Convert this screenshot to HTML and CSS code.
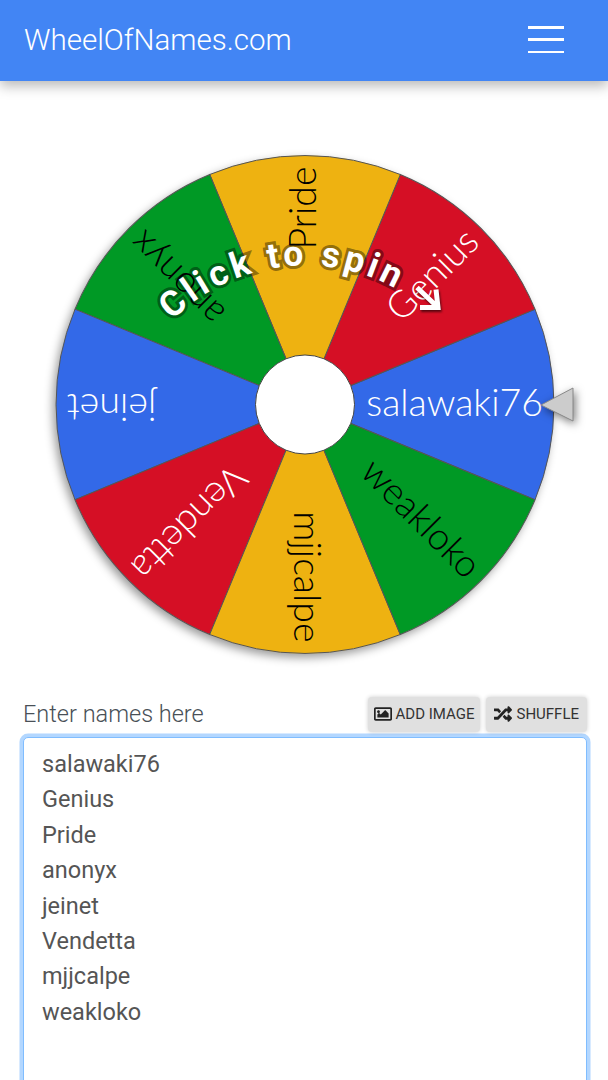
FILE: index.html
```html
<!DOCTYPE html>
<html lang="en">
<head>
    <meta charset="UTF-8">
    <meta name="viewport" content="width=device-width, initial-scale=1.0">
    <title>Wheel of Names</title>
    <link rel="stylesheet" href="styles.css">
</head>
<body>
    <header class="navbar">
        <h1 class="brand">WheelOfNames.com</h1>
        <button class="burger" aria-label="Menu"><span></span><span></span><span></span></button>
    </header>
    <div class="wheel-box">
        <svg class="wheel" width="608" height="600" viewBox="-305 -304.5 608 600">
            <circle class="wheel-shadow" r="249"/>
            <g>
                <path class="wedge blue" d="M0 0L230 -95.3A249 249 0 0 1 230 95.3Z"/>
                <path class="wedge red" transform="rotate(-45)" d="M0 0L230 -95.3A249 249 0 0 1 230 95.3Z"/>
                <path class="wedge yellow" transform="rotate(-90)" d="M0 0L230 -95.3A249 249 0 0 1 230 95.3Z"/>
                <path class="wedge green" transform="rotate(-135)" d="M0 0L230 -95.3A249 249 0 0 1 230 95.3Z"/>
                <path class="wedge blue" transform="rotate(180)" d="M0 0L230 -95.3A249 249 0 0 1 230 95.3Z"/>
                <path class="wedge red" transform="rotate(135)" d="M0 0L230 -95.3A249 249 0 0 1 230 95.3Z"/>
                <path class="wedge yellow" transform="rotate(90)" d="M0 0L230 -95.3A249 249 0 0 1 230 95.3Z"/>
                <path class="wedge green" transform="rotate(45)" d="M0 0L230 -95.3A249 249 0 0 1 230 95.3Z"/>
            </g>
            <text class="name light" x="238" y="11">salawaki76</text>
            <text class="name light" x="238" y="11" transform="rotate(-45)">Genius</text>
            <text class="name dark" x="238" y="11" transform="rotate(-90)">Pride</text>
            <text class="name dark" x="238" y="11" transform="rotate(-135)">anonyx</text>
            <text class="name light" x="238" y="11" transform="rotate(180)">jeinet</text>
            <text class="name light" x="238" y="11" transform="rotate(135)">Vendetta</text>
            <text class="name dark" x="238" y="11" transform="rotate(90)">mjjcalpe</text>
            <text class="name dark" x="238" y="11" transform="rotate(45)">weakloko</text>
            <circle class="hub" r="49.5"/>
            <path class="pointer" d="M236 0.500L268 -16.500V16.500Z"/>
            <path id="spin-arc" class="arc" d="M-133 -84A188 188 0 0 1 108 -105"/>
            <text class="spin"><textPath href="#spin-arc">Click to spin</textPath></text>
            <path class="spin-arrow" d="M112 -117L132 -98M131 -115L133 -97H115"/>
        </svg>
    </div>
    <section class="names">
        <div class="names-top">
            <label class="names-label" for="entries">Enter names here</label>
            <div class="names-buttons">
                <button class="tool-btn">
                    <svg class="tool-icon" viewBox="0 0 512 512"><path d="M464 64H48C21.500 64 0 85.500 0 112v288c0 26.500 21.500 48 48 48h416c26.500 0 48-21.500 48-48V112c0-26.500-21.500-48-48-48zm-6 336H54a6 6 0 0 1-6-6V118a6 6 0 0 1 6-6h404a6 6 0 0 1 6 6v276a6 6 0 0 1-6 6zM128 152c-22 0-40 18-40 40s18 40 40 40 40-18 40-40-18-40-40-40zM96 352h320V240l-87.500-87.500c-4.700-4.700-12.300-4.700-17 0L192 272l-39.500-39.500c-4.700-4.700-12.300-4.700-17 0L96 272v80z"/></svg>
                    Add image
                </button>
                <button class="tool-btn tool-btn-wide">
                    <svg class="tool-icon" viewBox="0 0 512 512"><path d="M504.971 359.029c9.373 9.373 9.373 24.569 0 33.941l-80 79.984c-15.010 15.010-40.971 4.490-40.971-16.971V416h-58.785a12.004 12.004 0 0 1-8.773-3.812l-70.556-75.596 53.333-57.143L352 336h32v-39.981c0-21.438 25.943-31.998 40.971-16.971l80 79.981zM12 176h84l52.781 56.551 53.333-57.143-70.556-75.596A11.999 11.999 0 0 0 122.785 96H12c-6.627 0-12 5.373-12 12v56c0 6.627 5.373 12 12 12zm372 0v39.984c0 21.460 25.961 31.980 40.971 16.971l80-79.984c9.373-9.373 9.373-24.569 0-33.941l-80-79.981C409.943 24.021 384 34.582 384 56.019V96h-58.785a12.004 12.004 0 0 0-8.773 3.812L96 336H12c-6.627 0-12 5.373-12 12v56c0 6.627 5.373 12 12 12h110.785c3.326 0 6.503-1.381 8.773-3.812L352 176h32z"/></svg>
                    Shuffle
                </button>
            </div>
        </div>
        <textarea id="entries" class="entries" spellcheck="false">salawaki76
Genius
Pride
anonyx
jeinet
Vendetta
mjjcalpe
weakloko</textarea>
    </section>
</body>
</html>
```

FILE: styles.css
```css
html, body {
    height: 100%;
}
body {
    font-family: Roboto, "Liberation Sans", sans-serif;
    margin: 0;
    background-color: #fff;
    overflow: hidden;
}
.navbar {
    background-color: #4285f4;
    height: 81px;
    padding: 0 44px 2px 24px;
    box-sizing: border-box;
    display: flex;
    align-items: center;
    justify-content: space-between;
    box-shadow: 0 5px 12px rgba(0, 0, 0, 0.28);
    position: relative;
}
.brand {
    margin: 0;
    color: #fff;
    font-size: 29.5px;
    font-weight: 300;
}
.burger {
    width: 36px;
    height: 27px;
    padding: 0;
    border: none;
    background: none;
    display: flex;
    flex-direction: column;
    justify-content: space-between;
}
.burger span {
    display: block;
    height: 2.5px;
    background-color: #fff;
}
.wheel-box {
    padding-top: 19px;
    height: 597px;
}
.wheel {
    display: block;
}
.wheel-shadow {
    fill: #fff;
    filter: drop-shadow(-3px 4px 5px rgba(0, 0, 0, 0.4));
}
.wedge {
    stroke: #555;
    stroke-width: 1;
}
.blue { fill: #3369e8; }
.red { fill: #d50f25; }
.yellow { fill: #eeb211; }
.green { fill: #009925; }
.name {
    font-family: Lato, sans-serif;
    font-weight: 300;
    font-size: 37.5px;
    text-anchor: end;
}
.light { fill: #fff; }
.dark { fill: #000; }
.hub {
    fill: #fff;
    stroke: #444;
    stroke-width: 1;
}
.pointer {
    fill: #ccc;
    stroke: #888;
    stroke-width: 1;
    filter: drop-shadow(2px 3px 4px rgba(0, 0, 0, 0.5));
}
.arc {
    fill: none;
}
.spin {
    font-family: Roboto, sans-serif;
    font-weight: 700;
    font-size: 35.5px;
    letter-spacing: 3.8px;
    fill: #fff;
    stroke: rgba(0, 0, 0, 0.4);
    stroke-width: 6px;
    paint-order: stroke;
}
.spin-arrow {
    fill: none;
    stroke: #fff;
    stroke-width: 5;
    filter: drop-shadow(1px 2px 1px rgba(0, 0, 0, 0.6));
}
.names {
    padding: 0 21px 0 23px;
}
.names-top {
    display: flex;
    align-items: flex-end;
    justify-content: space-between;
    margin-bottom: 5px;
}
.names-label {
    color: #495057;
    font-size: 23.5px;
    font-weight: 300;
    line-height: 32px;
    margin-bottom: 2px;
}
.names-buttons {
    display: flex;
    gap: 6px;
}
.tool-btn {
    height: 35px;
    padding: 0 6px 2px;
    border: none;
    border-radius: 4px;
    background-color: #e0e0e0;
    box-shadow: 0 0 4px rgba(0, 0, 0, 0.2);
    color: #333;
    font-family: Roboto, sans-serif;
    font-size: 15px;
    text-transform: uppercase;
    display: flex;
    align-items: center;
    gap: 4px;
}
.tool-btn-wide {
    padding: 0 8px 2px;
}
.tool-icon {
    width: 18px;
    height: 18px;
    fill: #222;
}
.entries {
    display: block;
    width: 100%;
    height: 500px;
    box-sizing: border-box;
    padding: 9px 18px;
    border: 1px solid #80bdff;
    border-radius: 5px;
    box-shadow: 0 0 0 3.5px rgba(128, 189, 255, 0.6);
    color: #555;
    font-family: Roboto, sans-serif;
    font-size: 23.5px;
    font-weight: 400;
    line-height: 35.4px;
    resize: none;
    outline: none;
}
```
